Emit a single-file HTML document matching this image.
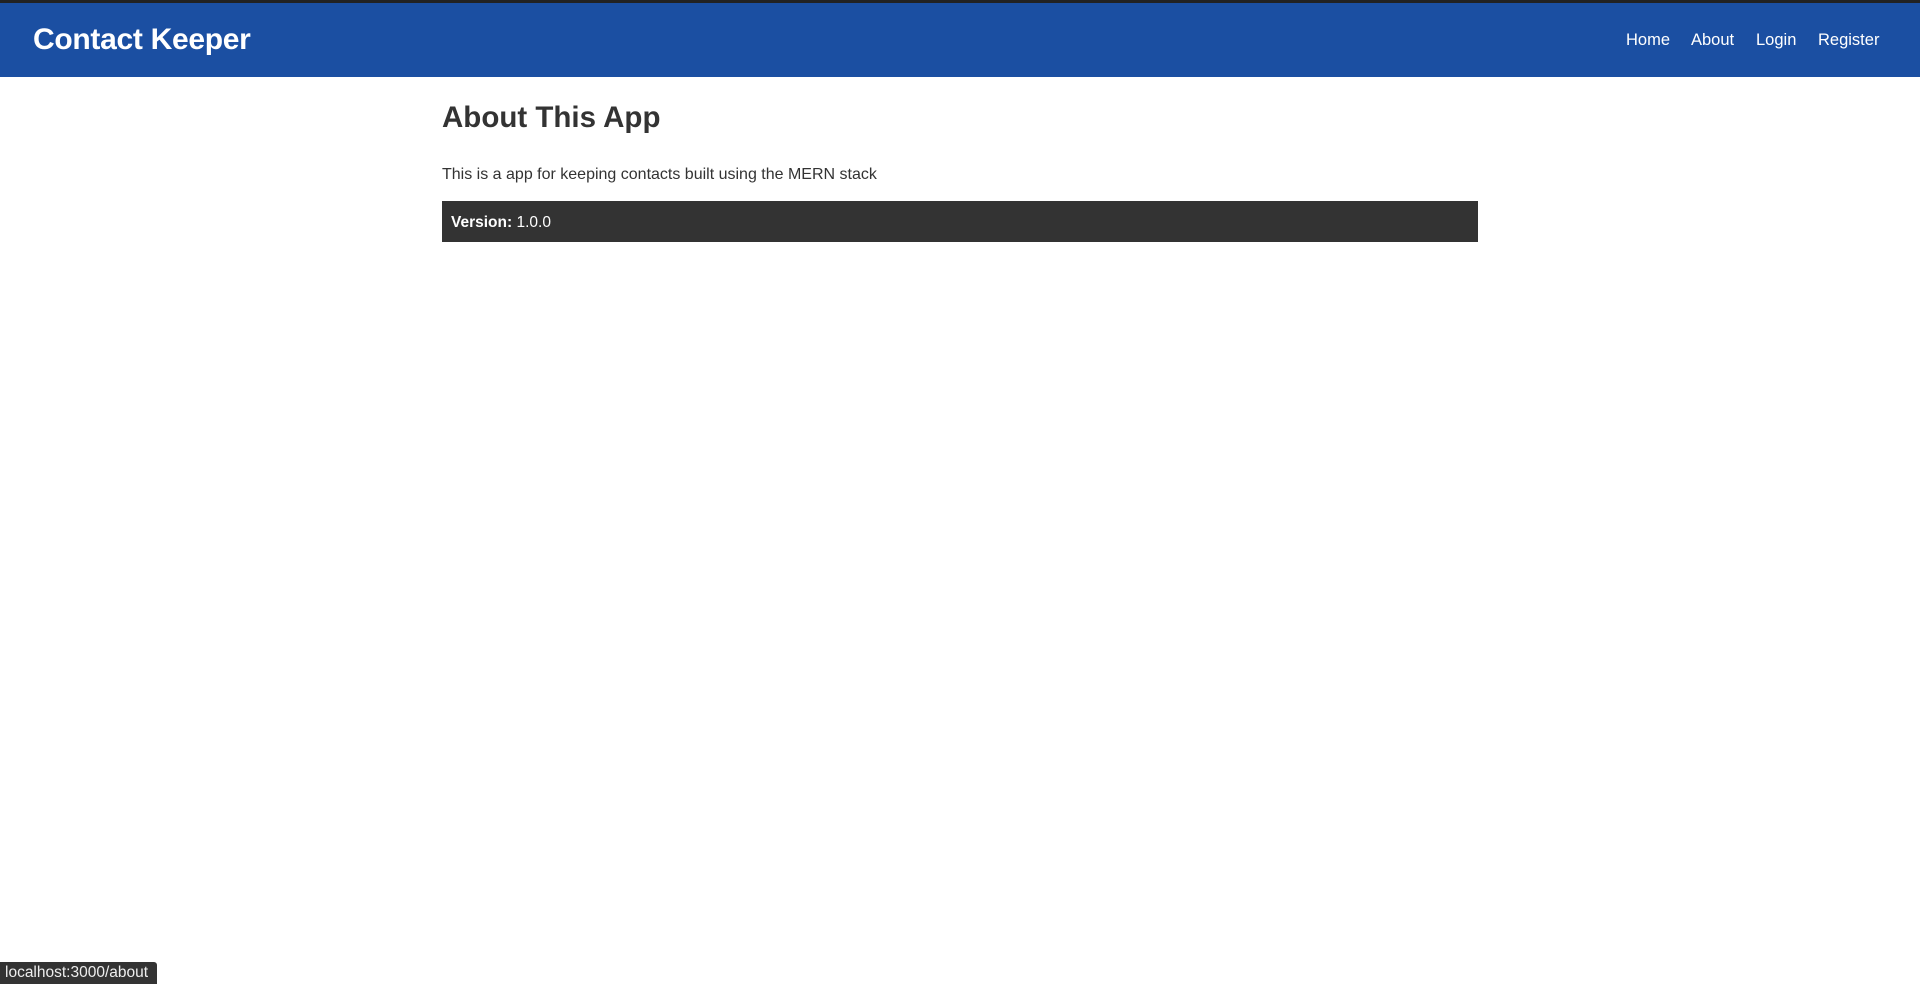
<!DOCTYPE html>
<html><head><meta charset="utf-8"><style>
*{margin:0;padding:0;box-sizing:border-box}
body{width:1920px;height:984px;overflow:hidden;background:#fff;font-family:"Liberation Sans",sans-serif;color:#333;position:relative}
.nav{position:absolute;left:0;top:0;width:1920px;height:77px;background:#1b4fa2;border-top:3px solid #222}
.brand{position:absolute;left:33px;top:20px;font-size:30px;font-weight:bold;color:#fff;letter-spacing:-0.3px}
.links a{position:absolute;top:28px;color:#fff;font-size:16.5px;text-decoration:none}
h1{position:absolute;left:442px;top:101px;font-size:29.5px;font-weight:bold;color:#333}
p{position:absolute;left:442px;top:166px;font-size:16px;color:#333}
.ver{position:absolute;left:442px;top:201px;width:1036px;height:41px;background:#333;color:#fff;font-size:15.5px;padding:13px 9px}
.status{position:absolute;left:0;top:962px;width:157px;height:22px;background:#333;color:#eee;font-size:15.5px;padding:2px 5px;border-radius:0 3px 0 0}
</style></head><body>
<div class="nav"><div class="brand">Contact Keeper</div>
<div class="links"><a style="left:1626px">Home</a><a style="left:1691px">About</a><a style="left:1756px">Login</a><a style="left:1818px">Register</a></div></div>
<h1>About This App</h1>
<p>This is a app for keeping contacts built using the MERN stack</p>
<div class="ver"><b>Version:</b> 1.0.0</div>
<div class="status">localhost:3000/about</div>
</body></html>
